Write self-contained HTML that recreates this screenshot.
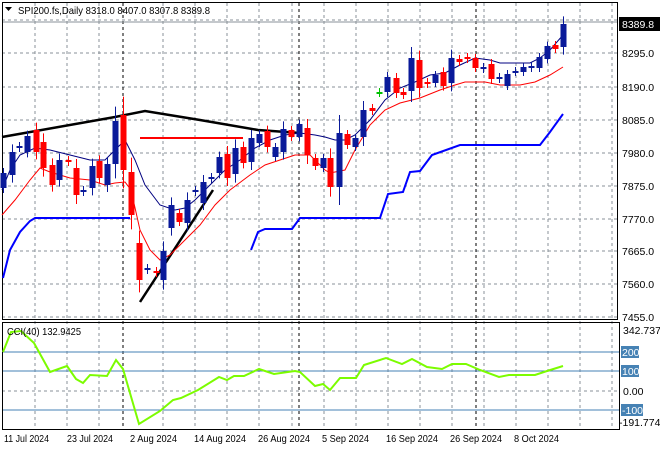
<!DOCTYPE html>
<html><head><meta charset="utf-8"><style>
body{margin:0;background:#fff;}
svg{display:block;font-family:"Liberation Sans",sans-serif;font-size:10.5px;}
</style></head><body>
<svg width="660" height="450" viewBox="0 0 660 450" xmlns="http://www.w3.org/2000/svg">
<rect width="660" height="450" fill="#fff"/>
<g stroke="#8a9299" stroke-dasharray="3,3" stroke-width="1">
<line x1="2" y1="20" x2="617" y2="20"/><line x1="2" y1="53" x2="617" y2="53"/><line x1="2" y1="87" x2="617" y2="87"/><line x1="2" y1="120" x2="617" y2="120"/><line x1="2" y1="153" x2="617" y2="153"/><line x1="2" y1="186" x2="617" y2="186"/><line x1="2" y1="219" x2="617" y2="219"/><line x1="2" y1="251" x2="617" y2="251"/><line x1="2" y1="284" x2="617" y2="284"/><line x1="2" y1="317" x2="617" y2="317"/>
<line x1="2" y1="391" x2="619" y2="391"/>
</g>
<g stroke="#8a9299" stroke-dasharray="3,3">
<path d="M35 3V429M67 3V429M99 3V429M163 3V429M195 3V429M227 3V429M259 3V429M292 3V429M324 3V429M356 3V429M388 3V429M420 3V429M452 3V429M484 3V429M516 3V429M548 3V429M580 3V429M612 3V429"/>
</g>
<g stroke="#000" stroke-dasharray="3,3"><path d="M123 3V429M299 3V429M476 3V429"/></g>
<line x1="2" y1="22" x2="617" y2="22" stroke="#8a9299"/>
<rect x="2.5" y="2.5" width="615" height="317" fill="none" stroke="#000"/>
<rect x="2.5" y="322.5" width="617" height="107" fill="none" stroke="#000"/>
<g fill="none" stroke="#0000ff" stroke-width="2">
<polyline points="3,278 10,250 20,232 30,221 35,218 130,218"/>
<polyline points="251,250 258,232 265,229 292,229 300,218 380,218 388,194 403,192 410,172 420,171 432,155 460,145 540,145 550,132 563,114"/>
</g>
<g fill="none" stroke="#000" stroke-width="2.5">
<polyline points="2,137 115,117 145,111 200,120 258,130 300,133"/>
<line x1="140" y1="302" x2="213" y2="190"/>
</g>
<line x1="140" y1="138" x2="243" y2="138" stroke="#ff0000" stroke-width="2"/>
<polyline fill="none" stroke="#000080" stroke-width="1" points="2,190 10,170 20,155 35,148 50,150 70,155 90,160 105,160 115,150 125,140 135,160 145,185 160,205 175,210 185,208 195,200 210,185 225,170 240,160 255,148 270,140 285,135 300,133 315,135 325,137 335,140 345,140 355,135 370,120 385,100 400,88 415,82 430,75 445,73 460,65 475,58 490,60 500,63 510,63 530,63 540,58 550,50 563,35"/>
<polyline fill="none" stroke="#ff0000" stroke-width="1" points="2,215 15,200 30,180 40,168 50,172 70,178 90,180 105,185 115,183 125,182 131,190 140,230 150,250 160,260 170,255 185,240 200,225 215,205 230,190 250,175 265,165 280,160 295,155 310,155 325,170 330,173 345,170 355,150 370,125 385,110 400,103 420,98 440,90 455,85 465,82 485,82 500,85 520,85 535,82 550,75 563,67"/>
<g id="c"></g>
<g stroke="#4682b4" stroke-width="1"><line x1="3" y1="352" x2="619" y2="352"/><line x1="3" y1="371" x2="619" y2="371"/><line x1="3" y1="410" x2="619" y2="410"/></g>
<polyline fill="none" stroke="#7cfc00" stroke-width="2" points="3,352 11,332 21,331 34,343 50,372 67,366 76,379 83,383 90,375 107,376 116,360 123,369 139,424 160,411 173,400 181,398 198,390 219,377 227,380 234,376 244,376 259,369 274,374 295,371 300,372 315,386 323,384 330,390 340,378 356,378 364,365 386,358 402,364 412,359 427,367 442,369 452,364 466,364 480,370 499,377 509,375 535,375 547,371 563,366"/>
<text x="7" y="335" fill="#000" textLength="74" lengthAdjust="spacingAndGlyphs">CCI(40) 132.9425</text>
<g fill="#000">
<text x="622" y="57">8295.0</text><text x="622" y="91">8190.0</text><text x="622" y="124">8085.0</text><text x="622" y="157">7980.0</text><text x="622" y="190">7875.0</text><text x="622" y="223">7770.0</text><text x="622" y="255">7665.0</text><text x="622" y="288">7560.0</text><text x="622" y="321">7455.0</text>
<text x="623" y="334">342.7377</text><text x="623" y="395">0.00</text><text x="619" y="426">-191.774</text>
</g>
<rect x="619" y="17" width="41" height="14" fill="#000"/><text x="622" y="28" fill="#fff">8389.8</text>
<g fill="#4682b4"><rect x="621" y="346" width="18" height="12"/><rect x="621" y="365" width="18" height="12"/><rect x="621" y="404" width="22" height="12"/></g>
<g fill="#fff"><text x="622" y="356">200</text><text x="622" y="375">100</text><text x="622" y="414">-100</text></g>
<g fill="#000" lengthAdjust="spacingAndGlyphs">
<text x="4" y="442" textLength="45" lengthAdjust="spacingAndGlyphs">11 Jul 2024</text>
<text x="67" y="442" textLength="46" lengthAdjust="spacingAndGlyphs">23 Jul 2024</text>
<text x="130" y="442" textLength="47" lengthAdjust="spacingAndGlyphs">2 Aug 2024</text>
<text x="194" y="442" textLength="52" lengthAdjust="spacingAndGlyphs">14 Aug 2024</text>
<text x="258" y="442" textLength="52" lengthAdjust="spacingAndGlyphs">26 Aug 2024</text>
<text x="322" y="442" textLength="47" lengthAdjust="spacingAndGlyphs">5 Sep 2024</text>
<text x="386" y="442" textLength="52" lengthAdjust="spacingAndGlyphs">16 Sep 2024</text>
<text x="450" y="442" textLength="52" lengthAdjust="spacingAndGlyphs">26 Sep 2024</text>
<text x="514" y="442" textLength="45" lengthAdjust="spacingAndGlyphs">8 Oct 2024</text>
</g>
<path d="M5 7h7l-3.5 4z" fill="#000"/>
<text x="18" y="14" fill="#000" textLength="192" lengthAdjust="spacingAndGlyphs">SPI200.fs,Daily  8318.0 8407.0 8307.8 8389.8</text>
</svg>
<script>
var d=[[3,'b',173,188],[12,'b',152,175],[19,'b',146,148],[27,'b',136,152],[36,'r',130,152],[43,'r',142,168],[52,'r',165,185],[59,'b',160,180],[68,'r',160,162],[76,'r',168,195],[83,'b',190,192],[92,'b',166,188],[99,'r',161,178],[107,'b',164,185],[115,'b',121,164],[123,'r',115,170],[131,'r',172,215],[139,'r',243,280],[147,'b',268,270],[156,'r',271,273],[163,'b',251,280],[171,'b',205,228],[179,'r',213,222],[187,'b',200,223],[195,'b',190,192],[203,'b',182,203],[211,'b',177,179],[219,'b',157,173],[227,'r',154,178],[235,'b',148,174],[243,'r',147,163],[251,'b',138,162],[259,'b',134,143],[267,'r',131,147],[275,'b',147,157],[283,'b',129,152],[291,'r',130,137],[299,'b',124,137],[307,'r',128,155],[315,'r',158,166],[323,'b',158,168],[330,'r',158,187],[339,'b',133,187],[347,'r',134,145],[355,'b',138,147],[363,'b',110,137],[372,'r',108,111],[379,'g',92,93],[387,'b',77,92],[396,'r',78,93],[403,'r',92,95],[411,'b',58,91],[419,'r',60,88],[427,'r',82,84],[435,'b',75,83],[443,'r',72,86],[451,'b',58,83],[459,'r',59,62],[467,'r',57,59],[475,'r',58,68],[483,'b',67,69],[491,'r',64,79],[499,'b',77,79],[507,'b',74,86],[515,'b',71,72],[523,'b',67,72],[531,'b',66,68],[539,'b',57,68],[547,'b',46,59],[555,'r',45,49],[563,'b',24,47]];
var s='',col={b:'#0a1a9a',r:'#ff0000',g:'#00c000'};
d.forEach(function(c){var x=c[0],f=col[c[1]],t=c[2],b=c[3],w=Math.max(4,(b-t)/3);
s+='<line x1="'+(x+.5)+'" y1="'+(t-w)+'" x2="'+(x+.5)+'" y2="'+(b+w)+'" stroke="'+f+'"/>';
s+='<rect x="'+(x-2.5)+'" y="'+t+'" width="6" height="'+Math.max(2,b-t)+'" fill="'+f+'"/>';});
document.getElementById('c').innerHTML=s;
</script>
</body></html>
